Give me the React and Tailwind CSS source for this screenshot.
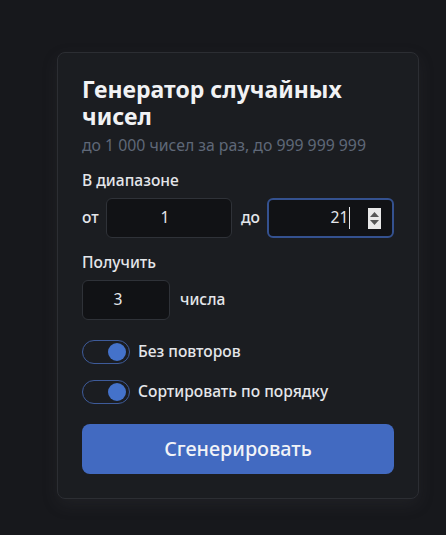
import React from "react";

function Toggle() {
  return (
    <div className="w-[48px] h-[24px] rounded-full border border-[#3e5b9a] flex items-center justify-end pr-[3px] shrink-0">
      <div className="w-[18px] h-[18px] rounded-full bg-[#4472ca]" />
    </div>
  );
}

function Spinner() {
  return (
    <div className="w-[13px] h-[21px] bg-[#e8e8e8] flex flex-col items-center justify-center gap-[3px]">
      <svg width="9" height="5" viewBox="0 0 9 5"><path d="M4.5 0L9 5H0Z" fill="#555" /></svg>
      <svg width="9" height="5" viewBox="0 0 9 5"><path d="M0 0H9L4.5 5Z" fill="#555" /></svg>
    </div>
  );
}

export default function App() {
  return (
    <div className="min-h-[535px] w-full bg-[#17181c] pt-[52px] pl-[57px]" style={{ fontFamily: '"Noto Sans", "Open Sans", sans-serif' }}>
      <div className="w-[362px] rounded-[8px] border border-[#2c2e33] bg-[#1b1d21] px-[24px] pt-[23px] pb-[24px] shadow-[0_6px_16px_rgba(70,72,80,0.18)]">
        <h1 className="text-[23px] font-bold leading-[27px] text-[#f1f2f4] pr-[30px]">Генератор случайных чисел</h1>
        <p className="mt-[6px] text-[15.8px] leading-[18px] text-[#5f6878]">до 1 000 чисел за раз, до 999 999 999</p>

        <div className="mt-[16px] text-[15.6px] font-medium leading-[20px] text-[#e4e6ea]">В диапазоне</div>
        <div className="mt-[8px] flex items-center">
          <span className="text-[15.6px] font-medium text-[#e4e6ea] w-[24px]">от</span>
          <div className="w-[126px] h-[40px] rounded-[6px] border border-[#2f3238] bg-[#111215] flex items-center justify-center pr-[8px] text-[15.6px] text-[#e4e6ea]">1</div>
          <span className="text-[15.6px] font-medium text-[#e4e6ea] ml-[9px] w-[26px]">до</span>
          <div className="w-[127px] h-[40px] rounded-[6px] border-2 border-[#34518f] bg-[#111215] flex items-center pl-[44px] pr-[11px] text-[15.6px] text-[#e4e6ea]">
            <span className="flex-1 text-center flex items-center justify-center">21<span className="inline-block w-px h-[22px] bg-[#e4e6ea] ml-[1px]" /></span>
            <Spinner />
          </div>
        </div>

        <div className="mt-[14px] text-[15.6px] font-medium leading-[20px] text-[#e4e6ea]">Получить</div>
        <div className="mt-[8px] flex items-center">
          <div className="w-[88px] h-[40px] rounded-[6px] border border-[#2f3238] bg-[#111215] flex items-center justify-center pr-[16px] text-[15.6px] text-[#e4e6ea]">3</div>
          <span className="ml-[10px] text-[15.6px] font-medium text-[#e4e6ea]">числа</span>
        </div>

        <div className="mt-[20px] flex items-center gap-[8px]">
          <Toggle />
          <span className="text-[15.6px] font-medium text-[#e4e6ea]">Без повторов</span>
        </div>
        <div className="mt-[16px] flex items-center gap-[8px]">
          <Toggle />
          <span className="text-[15.6px] font-medium text-[#e4e6ea]">Сортировать по порядку</span>
        </div>

        <button className="mt-[20px] w-full h-[50px] rounded-[8px] bg-[#426ac1] text-[19.8px] font-medium text-[#f1f3f7]">Сгенерировать</button>
      </div>
    </div>
  );
}
